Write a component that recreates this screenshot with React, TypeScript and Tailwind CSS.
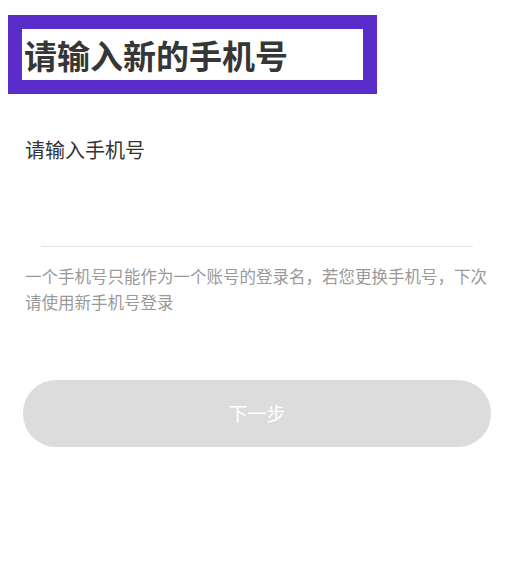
export default function App() {
  return (
    <div className="w-[509px] h-[568px] bg-white font-['Noto_Sans_CJK_SC','Noto_Sans',sans-serif] overflow-hidden">
      <div className="pt-[15px] pl-[8px]">
        <div className="w-[369px] h-[79px] border-[14px] border-[#5a2dcb] flex items-center pl-[2px] pt-[2px]">
          <h1 className="text-[33px] leading-none font-bold text-[#363636]">请输入新的手机号</h1>
        </div>
      </div>

      <div className="mt-[46px] px-[25px] text-[20px] leading-[20px] text-[#333333]">请输入手机号</div>

      <div className="mt-[86px] ml-[41px] w-[432px] h-px bg-[#e6e6e6]" />

      <p className="mt-[16px] ml-[25px] w-[476px] text-[16.5px] leading-[26px] text-[#999999]">
        一个手机号只能作为一个账号的登录名，若您更换手机号，下次请使用新手机号登录
      </p>

      <button
        type="button"
        className="mt-[65px] ml-[23px] w-[468px] h-[67px] rounded-[33px] bg-[#dcdcdc] text-white text-[19px] flex items-center justify-center"
      >
        下一步
      </button>
    </div>
  )
}
